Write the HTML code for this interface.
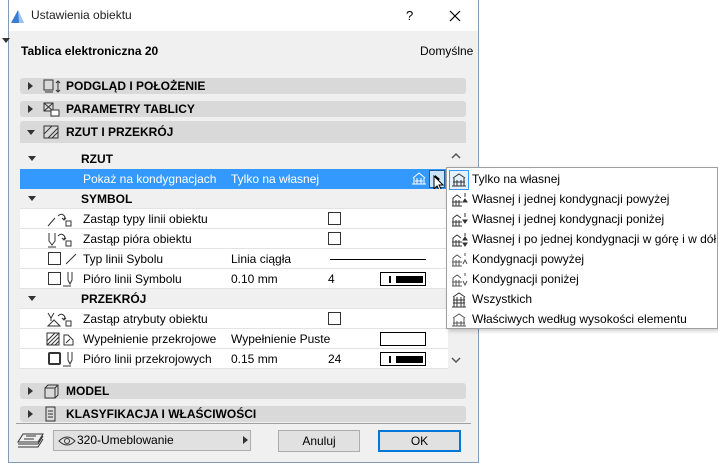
<!DOCTYPE html>
<html><head><meta charset="utf-8"><style>
*{box-sizing:border-box;margin:0;padding:0}
body{width:718px;height:463px;background:#fff;font-family:"Liberation Sans","DejaVu Sans",sans-serif;font-size:12px;color:#000;position:relative;overflow:hidden}
.abs{position:absolute}
.dlg{left:8px;top:0;width:471px;height:463px;background:#f0f0f0;border:1px solid #7f9db9;border-top:none}
.title{left:9px;top:0;width:469px;height:31px;background:#fff}
.hdr{position:absolute;left:20px;width:446px;background:#d9d9d9;border-radius:3px;font-weight:bold;font-size:12px}
.hdr span{position:absolute;left:46px;top:2px}
.tri{position:absolute;width:0;height:0}
.tr{border-top:4px solid transparent;border-bottom:4px solid transparent;border-left:5px solid #333}
.td{border-left:4px solid transparent;border-right:4px solid transparent;border-top:5px solid #333}
.row{position:absolute;left:20px;width:428px;height:20px;background:#fff;border-bottom:1px solid #e3e3e3}
.row.g{background:#f0f0f0}
.row span{position:absolute;top:3px}
.cb{position:absolute;width:13px;height:13px;border:1px solid #333;background:#fff}
.pen{position:absolute;width:46px;height:14px;border:1px solid #000;background:#fff}
.pen i{position:absolute;left:8px;top:3px;width:2px;height:7px;background:#000}
.pen b{position:absolute;left:15px;top:3px;width:27px;height:7px;background:#000}
.pop{left:446px;top:167px;width:272px;height:162px;background:#fff;border:1px solid #a0a0a0;box-shadow:2px 2px 4px rgba(0,0,0,.2)}
.pi{position:absolute;left:25px;font-size:12px}
.ic{position:absolute;left:4px}
.btn{position:absolute;height:22px;background:#e1e1e1;border:1px solid #adadad;text-align:center;line-height:20px}
</style></head><body>
<div class="abs dlg"></div>
<div class="abs title"></div>
<svg class="abs" style="left:10px;top:9px" width="15" height="15"><path d="M1 14 L8 1 L14 14 Z" fill="#3a7bd5"/><path d="M8 1 L14 14 L9 14 Z" fill="#9cc3f0"/></svg>
<div class="abs" style="left:31px;top:8px;font-size:12px;color:#222">Ustawienia obiektu</div>
<div class="abs" style="left:406px;top:8px;font-size:13px">?</div>
<svg class="abs" style="left:449px;top:10px" width="12" height="12"><path d="M1 1L11 11M11 1L1 11" stroke="#000" stroke-width="1.2"/></svg>
<div class="tri td" style="left:2px;top:38px"></div>
<div class="abs" style="left:21px;top:44px;font-weight:bold;font-size:12px">Tablica elektroniczna 20</div>
<div class="abs" style="left:420px;top:44px;font-size:12px">Domyślne</div>

<div class="hdr" style="top:78px;height:16px"><div class="tri tr" style="left:8px;top:4px"></div><svg class="abs" style="left:22px;top:1px" width="20" height="15"><rect x="2" y="1" width="9" height="10" fill="none" stroke="#333"/><path d="M3 13h8M16 2v11M14 4l2-2 2 2M14 11l2 2 2-2" stroke="#333" fill="none"/></svg><span style="left:46px;top:1px">PODGLĄD I POŁOŻENIE</span></div>
<div class="hdr" style="top:101px;height:16px"><div class="tri tr" style="left:8px;top:4px"></div><svg class="abs" style="left:22px;top:1px" width="20" height="15"><rect x="2" y="1" width="9" height="8" fill="none" stroke="#333"/><path d="M2 1l9 8M11 1l-9 8" stroke="#333"/><rect x="9" y="8" width="8" height="6" fill="#fff" stroke="#333"/></svg><span style="top:1px">PARAMETRY TABLICY</span></div>
<div class="hdr" style="top:121px;height:22px;border-radius:3px 3px 0 0"><div class="tri td" style="left:7px;top:9px"></div><svg class="abs" style="left:22px;top:3px" width="20" height="16"><rect x="2" y="2" width="14" height="12" fill="none" stroke="#333"/><path d="M6 14L16 4M10 14L16 8M2 10L10 2" stroke="#333"/></svg><span style="top:4px">RZUT I PRZEKRÓJ</span></div>

<div class="row g" style="top:147px;height:22px;border:none"><div class="tri td" style="left:8px;top:9px"></div><span style="left:61px;top:5px;font-weight:bold">RZUT</span></div>
<div class="row" style="top:169px;background:#3399ff;color:#fff;border:none"><span style="left:63px">Pokaż na kondygnacjach</span><span style="left:211px">Tylko na własnej</span>
<svg class="abs" style="left:391px;top:3px" width="16" height="14"><path d="M2 6L8 1 14 6M3 6v6M13 6v6M1 12h14M4 9h8M6 6v6M10 6v6" stroke="#fff" fill="none"/></svg>
<div class="abs" style="left:409px;top:1px;width:16px;height:18px;background:#cce4f7;border:1px solid #1c5a96"><div class="tri tr" style="left:5px;top:4px;border-left-color:#000"></div></div>
<svg class="abs" style="left:413px;top:6px" width="14" height="18"><path d="M1 1v13l3-3 3 6 2-1-3-6h4z" fill="#fff" stroke="#000"/></svg></div>
<div class="row g" style="top:189px"><div class="tri td" style="left:8px;top:7px"></div><span style="left:61px;font-weight:bold">SYMBOL</span></div>
<div class="row" style="top:209px"><svg class="abs" style="left:26px;top:3px" width="32" height="16"><path d="M2 14L9 6M12 4q4-4 7 1l-1 2M20 6l-2 2-2-2" stroke="#333" fill="none"/><rect x="20" y="9" width="5" height="5" fill="none" stroke="#333"/></svg><span style="left:63px">Zastąp typy linii obiektu</span><div class="cb" style="left:308px;top:3px"></div></div>
<div class="row" style="top:229px"><svg class="abs" style="left:26px;top:3px" width="32" height="16"><path d="M3 1v8l3 4 3-4V1M2 15h8M12 4q4-4 7 1l-1 2M20 6l-2 2-2-2" stroke="#333" fill="none"/><rect x="20" y="9" width="5" height="5" fill="none" stroke="#333"/></svg><span style="left:63px">Zastąp pióra obiektu</span><div class="cb" style="left:308px;top:3px"></div></div>
<div class="row" style="top:249px"><div class="cb" style="left:28px;top:3px"></div><svg class="abs" style="left:44px;top:3px" width="14" height="14"><path d="M2 12L12 2" stroke="#333"/></svg><span style="left:63px">Typ linii Sybolu</span><span style="left:211px">Linia ciągła</span><div class="abs" style="left:310px;top:10px;width:96px;height:1px;background:#000"></div></div>
<div class="row" style="top:269px"><div class="cb" style="left:28px;top:3px"></div><svg class="abs" style="left:42px;top:2px" width="16" height="16"><path d="M6 1v8l2 4 2-4V1M1 15h8" stroke="#333" fill="none"/></svg><span style="left:63px">Pióro linii Symbolu</span><span style="left:211px">0.10 mm</span><span style="left:308px">4</span><div class="pen" style="left:360px;top:3px"><i></i><b></b></div></div>
<div class="row g" style="top:289px"><div class="tri td" style="left:8px;top:7px"></div><span style="left:61px;font-weight:bold">PRZEKRÓJ</span></div>
<div class="row" style="top:309px"><svg class="abs" style="left:26px;top:3px" width="32" height="16"><path d="M2 1l3 5 3-5M5 6v3M2 14l6-6 6 6zM12 4q4-4 7 1l-1 2M20 6l-2 2-2-2" stroke="#333" fill="none"/><rect x="20" y="9" width="5" height="5" fill="none" stroke="#333"/></svg><span style="left:63px">Zastąp atrybuty obiektu</span><div class="cb" style="left:308px;top:3px"></div></div>
<div class="row" style="top:329px"><svg class="abs" style="left:26px;top:3px" width="32" height="16"><rect x="1" y="1" width="12" height="12" fill="none" stroke="#333"/><path d="M1 9L9 1M1 13L13 1M5 13L13 5M9 13L13 9" stroke="#333"/><path d="M18 13V3h4l5 5v5zM20 11l4-4" stroke="#333" fill="none"/></svg><span style="left:63px">Wypełnienie przekrojowe</span><span style="left:211px">Wypełnienie Puste</span><div class="pen" style="left:360px;top:3px"></div></div>
<div class="row" style="top:349px"><div class="cb" style="left:28px;top:3px;border-width:2px;border-radius:2px"></div><svg class="abs" style="left:42px;top:2px" width="16" height="16"><path d="M6 1v8l2 4 2-4V1M1 15h8" stroke="#333" fill="none"/></svg><span style="left:63px">Pióro linii przekrojowych</span><span style="left:211px">0.15 mm</span><span style="left:308px">24</span><div class="pen" style="left:360px;top:3px"><i></i><b></b></div></div>
<div class="abs" style="left:448px;top:147px;width:18px;height:222px;background:#f0f0f0"></div>
<svg class="abs" style="left:451px;top:152px" width="10" height="8"><path d="M1 6l4-4 4 4" stroke="#555" fill="none" stroke-width="1.5"/></svg>
<svg class="abs" style="left:451px;top:356px" width="10" height="8"><path d="M1 2l4 4 4-4" stroke="#555" fill="none" stroke-width="1.5"/></svg>

<div class="hdr" style="top:383px;height:16px"><div class="tri tr" style="left:8px;top:4px"></div><svg class="abs" style="left:22px;top:0px" width="20" height="16"><path d="M3 5h10v10H3zM3 5l3-3h10v10l-3 3M13 5l3-3" stroke="#333" fill="none"/></svg><span style="top:1px">MODEL</span></div>
<div class="hdr" style="top:406px;height:16px"><div class="tri tr" style="left:8px;top:4px"></div><svg class="abs" style="left:22px;top:0px" width="20" height="16"><path d="M4 1h9v14H4zM6 5h5M6 8h5M6 11h5" stroke="#333" fill="none"/></svg><span style="top:1px">KLASYFIKACJA I WŁAŚCIWOŚCI</span></div>
<div class="abs" style="left:16px;top:423px;width:455px;height:1px;background:#a0a0a0"></div>

<svg class="abs" style="left:17px;top:432px" width="28" height="18"><path d="M6 2h20l-5 8H1z M1 12h20l5-8 M1 15h20l5-8" stroke="#333" fill="none"/><path d="M9 4h10M7 7h10" stroke="#333"/></svg>
<div class="abs" style="left:53px;top:430px;width:198px;height:21px;background:#e1e1e1;border:1px solid #adadad"></div>
<svg class="abs" style="left:58px;top:435px" width="18" height="12"><path d="M1 6q8-8 16 0q-8 8-16 0z" stroke="#333" fill="none"/><circle cx="9" cy="6" r="2.5" fill="none" stroke="#333"/></svg>
<div class="abs" style="left:77px;top:433px">320-Umeblowanie</div>
<div class="tri tr" style="left:243px;top:436px;border-left-color:#333"></div>
<div class="btn" style="left:278px;top:430px;width:82px">Anuluj</div>
<div class="btn" style="left:378px;top:430px;width:83px;border:2px solid #0078d7;line-height:18px">OK</div>

<div class="abs pop">
<div class="abs" style="left:2px;top:2px;width:20px;height:20px;border:1px solid #3399ff;background:#e5f1fb"></div>
<svg class="ic" style="top:4px" width="16" height="16"><path d="M2 6L8 2 14 6M3 6v8M13 6v8M1 14h14M2 10h12M6 8v6M10 8v6" stroke="#333" fill="none"/></svg><div class="pi" style="top:4px">Tylko na własnej</div>
<svg class="ic" style="top:24px" width="18" height="16"><path d="M2 6L6 3 10 6M2 6v8M1 14h10M1 10h10M5 8v6M8 8v6" stroke="#333" fill="none"/><path d="M14 1v4M12 10l2-3 2 3z" stroke="#333" fill="#333"/></svg><div class="pi" style="top:24px">Własnej i jednej kondygnacji powyżej</div>
<svg class="ic" style="top:44px" width="18" height="16"><path d="M2 6L6 3 10 6M2 6v8M1 14h10M1 10h10M5 8v6M8 8v6" stroke="#333" fill="none"/><path d="M14 1v4M12 8l2 3 2-3z" stroke="#333" fill="#333"/></svg><div class="pi" style="top:44px">Własnej i jednej kondygnacji poniżej</div>
<svg class="ic" style="top:64px" width="18" height="16"><path d="M2 6L6 3 10 6M2 6v8M1 14h10M1 10h10M5 8v6M8 8v6" stroke="#333" fill="none"/><path d="M14 1v3M12 8l2-3 2 3zM12 11l2 3 2-3z" stroke="#333" fill="#333"/></svg><div class="pi" style="top:64px">Własnej i po jednej kondygnacji w górę i w dół</div>
<svg class="ic" style="top:84px" width="18" height="16"><path d="M2 6L6 3 10 6M2 6v8M1 14h10M1 10h10M5 8v6M8 8v6M14 1v3M12 12l2-4 2 4" stroke="#555" fill="none"/></svg><div class="pi" style="top:84px">Kondygnacji powyżej</div>
<svg class="ic" style="top:104px" width="18" height="16"><path d="M2 6L6 3 10 6M2 6v8M1 14h10M1 10h10M5 8v6M8 8v6M14 1v3M12 9l2 4 2-4" stroke="#555" fill="none"/></svg><div class="pi" style="top:104px">Kondygnacji poniżej</div>
<svg class="ic" style="top:124px" width="16" height="16"><path d="M2 5L8 1 14 5M3 5v10M13 5v10M1 15h14M2 8h12M2 11h12M6 5v10M10 5v10" stroke="#333" fill="none"/></svg><div class="pi" style="top:124px">Wszystkich</div>
<svg class="ic" style="top:144px" width="16" height="16"><path d="M2 6L8 2 14 6M3 6v8M13 6v8M1 14h14M2 11h12M6 9v5M10 9v5" stroke="#555" fill="none"/></svg><div class="pi" style="top:144px">Właściwych według wysokości elementu</div>
</div>
</body></html>
